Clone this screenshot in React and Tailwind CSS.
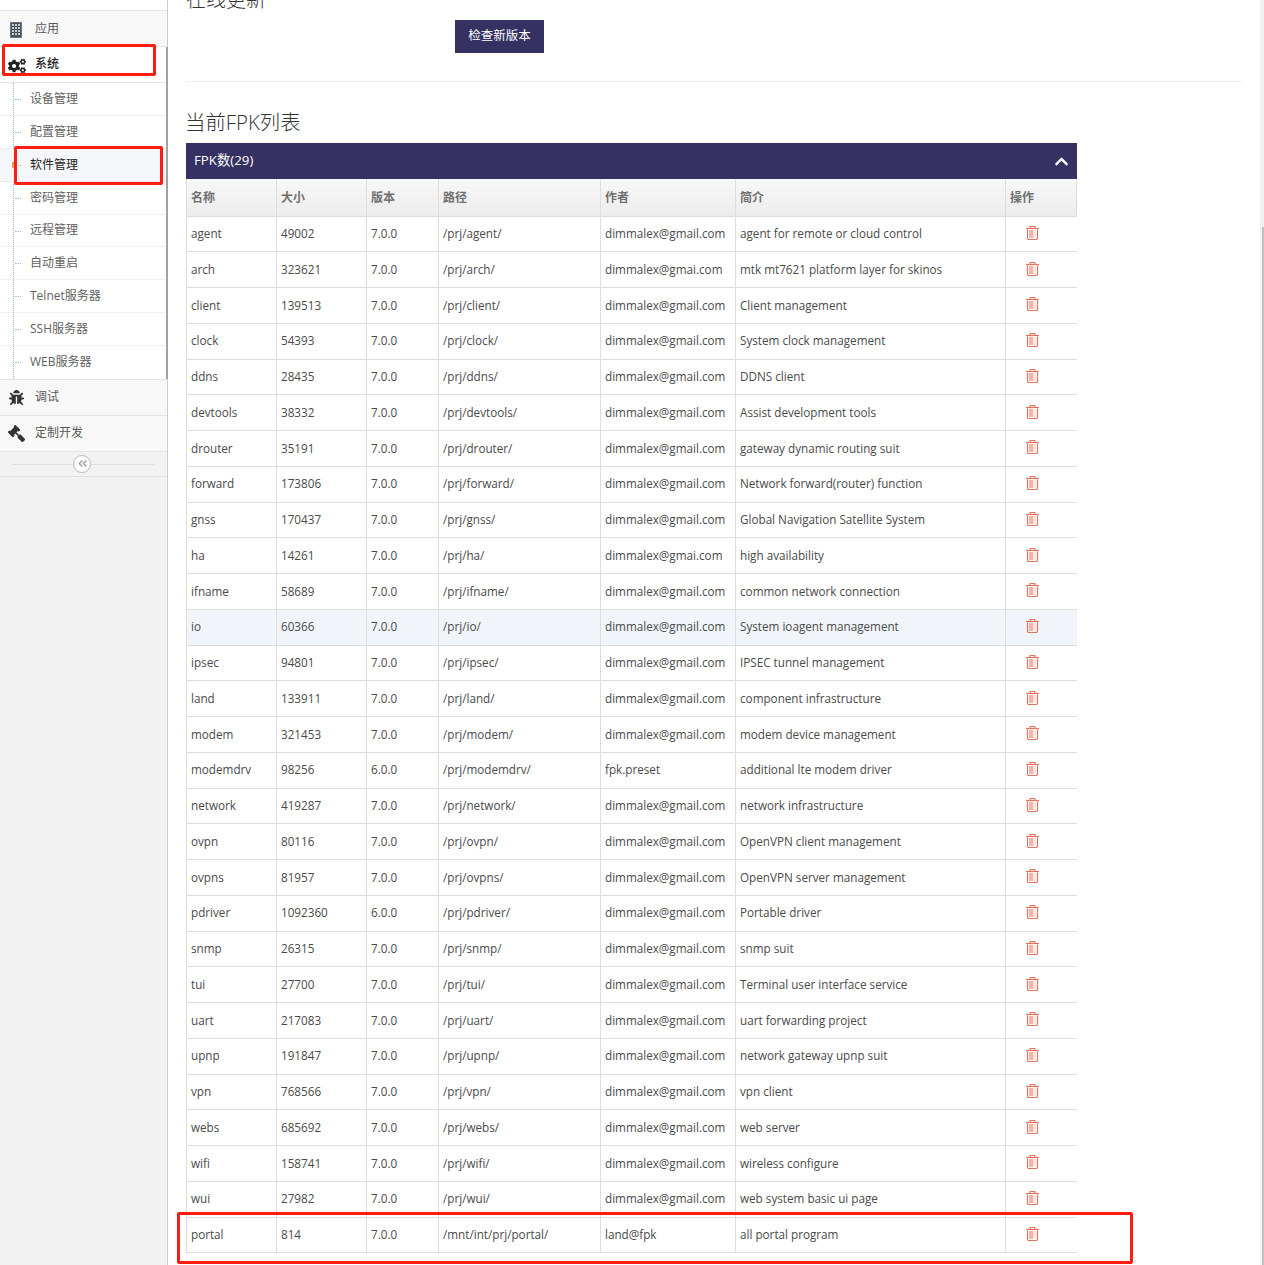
import React from 'react';
import { FaCogs, FaBug, FaGavel, FaChevronUp, FaAngleDoubleLeft } from 'react-icons/fa';

const G = 'dimmalex@gmail.com';
const rows = [
  ['agent', '49002', '7.0.0', '/prj/agent/', G, 'agent for remote or cloud control'],
  ['arch', '323621', '7.0.0', '/prj/arch/', 'dimmalex@gmai.com', 'mtk mt7621 platform layer for skinos'],
  ['client', '139513', '7.0.0', '/prj/client/', G, 'Client management'],
  ['clock', '54393', '7.0.0', '/prj/clock/', G, 'System clock management'],
  ['ddns', '28435', '7.0.0', '/prj/ddns/', G, 'DDNS client'],
  ['devtools', '38332', '7.0.0', '/prj/devtools/', G, 'Assist development tools'],
  ['drouter', '35191', '7.0.0', '/prj/drouter/', G, 'gateway dynamic routing suit'],
  ['forward', '173806', '7.0.0', '/prj/forward/', G, 'Network forward(router) function'],
  ['gnss', '170437', '7.0.0', '/prj/gnss/', G, 'Global Navigation Satellite System'],
  ['ha', '14261', '7.0.0', '/prj/ha/', 'dimmalex@gmai.com', 'high availability'],
  ['ifname', '58689', '7.0.0', '/prj/ifname/', G, 'common network connection'],
  ['io', '60366', '7.0.0', '/prj/io/', G, 'System ioagent management'],
  ['ipsec', '94801', '7.0.0', '/prj/ipsec/', G, 'IPSEC tunnel management'],
  ['land', '133911', '7.0.0', '/prj/land/', G, 'component infrastructure'],
  ['modem', '321453', '7.0.0', '/prj/modem/', G, 'modem device management'],
  ['modemdrv', '98256', '6.0.0', '/prj/modemdrv/', 'fpk.preset', 'additional lte modem driver'],
  ['network', '419287', '7.0.0', '/prj/network/', G, 'network infrastructure'],
  ['ovpn', '80116', '7.0.0', '/prj/ovpn/', G, 'OpenVPN client management'],
  ['ovpns', '81957', '7.0.0', '/prj/ovpns/', G, 'OpenVPN server management'],
  ['pdriver', '1092360', '6.0.0', '/prj/pdriver/', G, 'Portable driver'],
  ['snmp', '26315', '7.0.0', '/prj/snmp/', G, 'snmp suit'],
  ['tui', '27700', '7.0.0', '/prj/tui/', G, 'Terminal user interface service'],
  ['uart', '217083', '7.0.0', '/prj/uart/', G, 'uart forwarding project'],
  ['upnp', '191847', '7.0.0', '/prj/upnp/', G, 'network gateway upnp suit'],
  ['vpn', '768566', '7.0.0', '/prj/vpn/', G, 'vpn client'],
  ['webs', '685692', '7.0.0', '/prj/webs/', G, 'web server'],
  ['wifi', '158741', '7.0.0', '/prj/wifi/', G, 'wireless configure'],
  ['wui', '27982', '7.0.0', '/prj/wui/', G, 'web system basic ui page'],
  ['portal', '814', '7.0.0', '/mnt/int/prj/portal/', 'land@fpk', 'all portal program'],
];

const heads = ['名称', '大小', '版本', '路径', '作者', '简介', '操作'];
const widths = ['w-[90px]', 'w-[90px]', 'w-[72px]', 'w-[162px]', 'w-[135px]', 'w-[270px]', 'w-[71px]'];
const subItems = ['设备管理', '配置管理', '软件管理', '密码管理', '远程管理', '自动重启', 'Telnet服务器', 'SSH服务器', 'WEB服务器'];

const BuildingIcon = () => (
  <svg width="12" height="16" viewBox="0 0 12 16" className="mt-[3px] -ml-[3px]">
    <rect width="12" height="16" fill="#46525e" />
    <rect x="0.5" y="0.5" width="11" height="15" fill="none" stroke="#6d7882" />
    {[2, 5, 8, 11].map((y) => [2, 5, 8].map((x) => (
      <rect key={`${x}-${y}`} x={x} y={y} width="2" height="2" fill="#c3c9cf" />
    )))}
  </svg>
);

const TrashIcon = () => (
  <svg width="13" height="14" viewBox="0 0 13 14" fill="none" className="-mt-[2px]">
    <rect x="3" y="4" width="4" height="8" fill="#f3b5aa" />
    <rect x="7" y="4" width="3" height="8" fill="#fbe3de" />
    <path d="M1.5 3.5V12a1.5 1.5 0 0 0 1.5 1.5h7a1.5 1.5 0 0 0 1.5-1.5V3.5" stroke="#e2735f" strokeWidth="1.2" />
    <path d="M0 2.5h13" stroke="#e2735f" strokeWidth="1.2" />
    <path d="M4 2.5V1.2q0-.7.7-.7h3.6q.7 0 .7.7v1.3" stroke="#e2735f" strokeWidth="1.2" />
  </svg>
);

const MenuItem = ({ icon, label, active }) => (
  <div className={`flex items-center h-[36px] border-b border-[#e5e5e5] ${active ? 'bg-white text-[#222]' : 'bg-[#f8f8f8] text-[#585858]'}`}>
    <span className="w-[35px] flex justify-center shrink-0">{icon}</span>
    <span className={`text-[12px] ${active ? 'font-medium -mt-[2px]' : ''}`}>{label}</span>
  </div>
);

const Sidebar = () => (
  <div className="w-[168px] shrink-0 bg-[#f2f2f2] border-r border-[#ccc] h-full relative">
    <div className="h-[11px] bg-white border-b border-[#e5e5e5]" />
    <MenuItem icon={<BuildingIcon />} label="应用" />
    <MenuItem icon={<FaCogs className="text-[#222] text-[18px] mt-[3px] -ml-[1px]" />} label="系统" active />
    <ul className="bg-white relative">
      <span className="absolute left-[13px] top-0 bottom-0 border-l border-dotted border-[#9dbdd6]" />
      {subItems.map((s, i) => (
        <li
          key={s}
          className={`relative h-[32.875px] flex items-center pl-[30px] text-[12px] ${i === 2 ? 'bg-[#f4f6f9] text-[#222]' : 'text-[#616161]'} ${i < subItems.length - 1 ? 'border-b border-dotted border-[#e4e4e4]' : ''}`}
        >
          <span className="absolute left-[15px] top-[16px] w-[6px] border-t border-dotted border-[#9dbdd6]" />
          {i === 2 && <span className="absolute left-[12px] top-[13px] w-[3px] h-[6px] bg-[#e8a05c]" />}
          {s}
        </li>
      ))}
      <span className="absolute -right-[1px] top-[-36px] bottom-0 w-[2px] bg-[#a3a3a3]" />
    </ul>
    <div className="border-t border-[#e5e5e5]">
      <MenuItem icon={<FaBug className="text-[#333] text-[15px] -ml-[2px]" />} label="调试" />
      <MenuItem icon={<FaGavel className="text-[#333] text-[17px] -scale-x-100 -ml-[3px]" />} label="定制开发" />
    </div>
    <div className="h-[25px] border-b border-[#e0e0e0] flex items-center justify-center relative">
      <span className="absolute left-[11px] right-[13px] top-[12px] border-t border-[#e0e0e0]" />
      <span className="relative w-[18px] h-[18px] rounded-full border border-[#bbb] bg-white flex items-center justify-center text-[#aaa] text-[11px] -ml-[3px]">
        <FaAngleDoubleLeft />
      </span>
    </div>
  </div>
);

const FpkTable = () => (
  <div className="w-[891px]">
    <div className="h-[36px] bg-[#353263] text-white flex items-center justify-between pl-[8px] pr-[8px] text-[13.3px]">
      <span className="-mt-[1px]">FPK数(29)</span>
      <FaChevronUp className="text-[15px]" />
    </div>
    <table className="table-fixed border-collapse w-[890px] text-[11.7px] text-[#4a4a4a]">
      <colgroup>
        {widths.map((w, i) => <col key={i} className={w} />)}
      </colgroup>
      <thead>
        <tr className="h-[37px] bg-gradient-to-b from-[#f8f8f8] to-[#ececec]">
          {heads.map((h) => (
            <th key={h} className="border border-[#ddd] border-t-0 text-left text-[12px] font-bold text-[#707070] pl-[4px] pt-[2px]">{h}</th>
          ))}
        </tr>
      </thead>
      <tbody>
        {rows.map((r) => (
          <tr key={r[0]} className={`h-[35.75px] ${r[0] === 'io' ? 'bg-[#f1f5f9]' : ''}`}>
            {r.map((c, i) => (
              <td key={i} className="border-b border-l border-[#ddd] pl-[4px] whitespace-nowrap">{c}</td>
            ))}
            <td className="border-b border-l border-[#ddd] pl-[20px]">
              <TrashIcon />
            </td>
          </tr>
        ))}
      </tbody>
    </table>
  </div>
);

export default function App() {
  return (
    <div className="relative h-[1265px] overflow-hidden flex bg-white font-['Open_Sans','Noto_Sans_CJK_SC',sans-serif]">
      <Sidebar />
      <div className="flex-1 pl-[18px] pr-[23px]">
        <h4 className="text-[20px] leading-[28px] font-light text-[#333] -mt-[14px]">在线更新</h4>
        <div className="pl-[269px] mt-[6px] pb-[28px] border-b border-dotted border-[#e3e3e3]">
          <button className="w-[89px] h-[33px] bg-[#353263] text-white text-[12.5px] pb-[1px]">检查新版本</button>
        </div>
        <h3 className="text-[20.4px] leading-[28px] font-light text-[#333] -ml-[1px] mt-[26px] mb-[7px]">当前FPK列表</h3>
        <FpkTable />
      </div>
      {/* red annotation boxes */}
      <div className="absolute left-[2px] top-[44px] w-[154px] h-[32px] border-[3px] border-[#ff1c10] rounded-[2px]" />
      <div className="absolute left-[14px] top-[146px] w-[149px] h-[39px] border-[3px] border-[#ff1c10] rounded-[2px]" />
      <div className="absolute left-[177px] top-[1212px] w-[956px] h-[52px] border-[3px] border-[#ff1c10] rounded-[2px]" />
      {/* page scrollbar */}
      <div className="absolute right-0 top-0 bottom-0 w-[4px] bg-[#f1f1f1]">
        <div className="absolute right-0 left-[2px] top-[227px] bottom-0 bg-[#c1c1c1]" />
      </div>
    </div>
  );
}
